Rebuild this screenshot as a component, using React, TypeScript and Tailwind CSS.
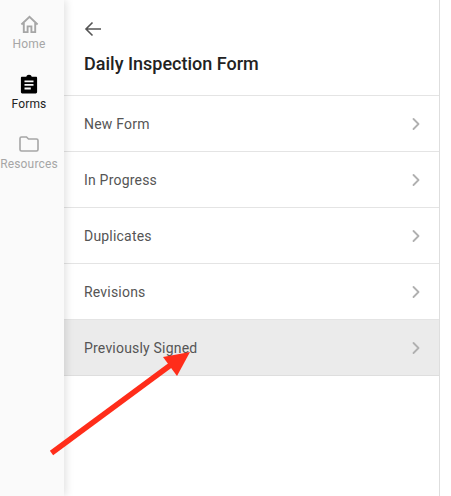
import { ChevronRight } from "lucide-react";

const rows = ["New Form", "In Progress", "Duplicates", "Revisions", "Previously Signed"];

function NavItem({ label, active, children }: { label: string; active?: boolean; children: React.ReactNode }) {
  return (
    <div className="flex flex-col items-center h-[60px]">
      <div className="h-[22px] flex items-center justify-center">{children}</div>
      <span className={`pt-[1px] text-[12px] leading-[16px] tracking-[0.15px] whitespace-nowrap ${active ? "text-[#222222]" : "text-[#a6a6a6]"}`}>
        {label}
      </span>
    </div>
  );
}

export default function App() {
  return (
    <div className="relative flex w-[451px] h-[496px] bg-white overflow-hidden font-['Roboto',sans-serif]">
      <aside className="w-[64px] shrink-0 bg-[#fafafa] pt-[13px] pr-[6px] flex flex-col shadow-[2px_0_8px_rgba(0,0,0,0.12)] z-10">
        <NavItem label="Home">
          <svg width="19" height="19" viewBox="0 0 20 20" fill="none" stroke="#a6a6a6" strokeWidth="2">
            <path d="M1.5 10 L10 2 L18.5 10" />
            <path d="M4 8.5 V18 H8 V12 H12 V18 H16 V8.5" />
          </svg>
        </NavItem>
        <NavItem label="Forms" active>
          <svg width="18" height="20" viewBox="0 0 20 22">
            <path
              fill="#000"
              fillRule="evenodd"
              d="M2.5 3 H7 C7.2 1.4 8.4 .6 10 .6 C11.6 .6 12.8 1.4 13 3 H17.5 C18.6 3 19 3.6 19 4.5 V20 C19 21 18.4 21.5 17.5 21.5 H2.5 C1.6 21.5 1 21 1 20 V4.5 C1 3.6 1.4 3 2.5 3 Z M5 7 V9 H15 V7 Z M5 11 V13 H15 V11 Z M5 15 V17 H12 V15 Z"
            />
          </svg>
        </NavItem>
        <NavItem label="Resources">
          <svg width="20" height="16" viewBox="0 0 20 16" fill="none" stroke="#a6a6a6" strokeWidth="1.6">
            <path d="M1 2.5 C1 1.5 1.5 1 2.5 1 H7.5 L9.5 3 H17.5 C18.5 3 19 3.5 19 4.5 V13.5 C19 14.5 18.5 15 17.5 15 H2.5 C1.5 15 1 14.5 1 13.5 Z" />
          </svg>
        </NavItem>
      </aside>

      <main className="w-[376px] shrink-0 border-r border-[#dedede] flex flex-col">
        <div className="h-[95px] px-[20px] pt-[21px]">
          <svg width="18" height="16" viewBox="0 0 18 16" fill="none" stroke="#555555" strokeWidth="1.6">
            <path d="M17 8 H2 M8.5 1.5 L2 8 L8.5 14.5" />
          </svg>
          <h1 className="mt-[15px] text-[18px] leading-[24px] font-medium text-[#222222]">Daily Inspection Form</h1>
        </div>
        {rows.map((row) => (
          <div
            key={row}
            className={`h-[56px] px-[20px] flex items-center justify-between border-t border-[#e4e4e4] ${
              row === "Previously Signed" ? "bg-[#ebebeb] border-b border-b-[#dedede] h-[57px]" : ""
            }`}
          >
            <span className="pt-[1px] text-[14px] tracking-[0.2px] text-[#555555]">{row}</span>
            <ChevronRight size={20} strokeWidth={2.2} className="text-[#b0b0b0] mr-[-7px]" />
          </div>
        ))}
      </main>

      <svg className="absolute left-0 top-0 z-20" width="451" height="496" viewBox="0 0 451 496">
        <path d="M51.5 453 L172 364" stroke="#ff2d1a" strokeWidth="5.5" fill="none" />
        <path d="M190 352 L163 357 L177 376 Z" fill="#ff2d1a" />
      </svg>
    </div>
  );
}
